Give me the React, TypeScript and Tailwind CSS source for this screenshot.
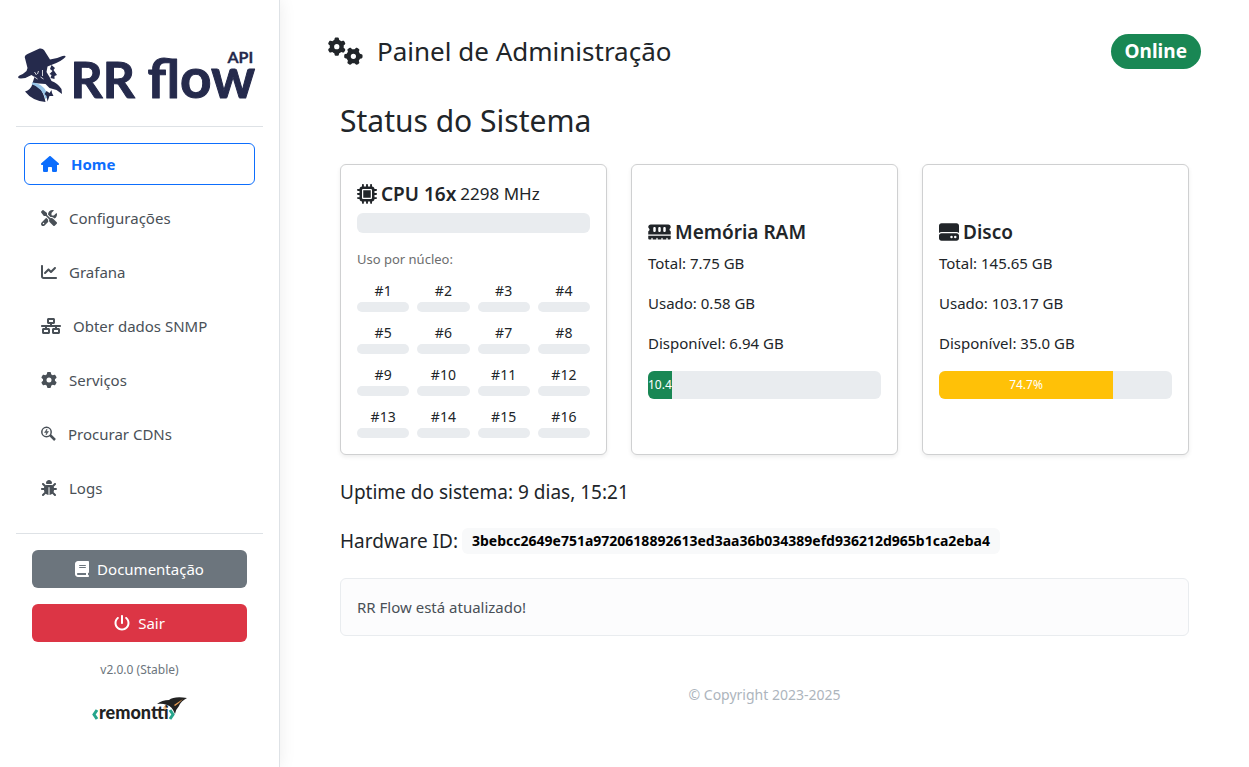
import type { ReactNode } from "react";
import {
  FaBook,
  FaBug,
  FaChartLine,
  FaGear,
  FaGears,
  FaHardDrive,
  FaHouse,
  FaMemory,
  FaMicrochip,
  FaNetworkWired,
  FaPowerOff,
  FaScrewdriverWrench,
} from "react-icons/fa6";

function FlowLogo() {
  return (
    <svg viewBox="0 0 238 56" className="block h-14 w-full overflow-visible" role="img" aria-label="RR flow API">
      <path
        d="M7 20L4.200 9Q4.500 7 7 6L19 0.500Q22 0 23.500 2L29.500 11.500Q37 10.500 42 8Q45.500 7 45 9Q40 14 32 16.500L27 18.500L26 24L29 29L31 33Q37 35 41 41L41.500 46L36 42L29 40L25 36L12 35L14 29L11 27Q5 31 -1.500 30.300Q-3.500 29 -1 27.500Q3 26 6 23Z"
        fill="#252a4c"
      />
      <path d="M12 36Q22 38 25 54Q12 53 4.500 43.500Q10 42 12 36Z" fill="#252a4c" />
      <path d="M12 34.500Q25 36 27.500 49L25 51Q22 40 11 36Z" fill="#98c5e8" />
      <path d="M26 43L29 45L31 42L31.500 45L33 48L29 48L27 53.500L26 48L24 46Z" fill="#252a4c" />
      <path d="M31 17L34.500 20L33 22L36.500 27L34 28L34 31L30 30L31 27L29 26L32 23L29.500 21Z" fill="#252a4c" />
      <path d="M14 24L16 27M18 23L17 26M22 22L22 28M14 29L17 31M20 29L23 31" stroke="#fff" strokeWidth="0.800" fill="none" />
      <g fill="#252a4c" stroke="#252a4c" strokeWidth="1" strokeLinejoin="round" fontFamily="Lato, sans-serif" fontWeight="700">
        <text x="50" y="50" fontSize="50">RR</text>
        <text x="127" y="50" fontSize="53">
          fl<tspan fontSize="55">ow</tspan>
        </text>
        <text x="207" y="15" fontSize="16" strokeWidth="0.3">API</text>
      </g>
    </svg>
  );
}

function RemonttiLogo() {
  return (
    <svg viewBox="0 0 96 28" className="block h-7 w-24 overflow-visible" role="img" aria-label="remontti">
      <path d="M5 14L2 18.500L5 23M78 14L81 18.500L78 23" fill="none" stroke="#27a58c" strokeWidth="3" />
      <text x="7" y="23" fontSize="18" fill="#222" fontFamily="Lato, sans-serif" fontWeight="900">remontti</text>
      <path d="M65 8Q70 4 77 4Q82 0 95 2Q89 5 87 10Q84 13 83 18Q80 10 75 9Q70 7 65 8Z" fill="#222" />
      <path d="M82 9L91 3L87 7L83 10Z" fill="#efa052" />
      <path d="M73 10V14M71 12H75" stroke="#f0ad68" strokeWidth="1" />
    </svg>
  );
}

function SearchBoltIcon({ className }: { className?: string }) {
  return (
    <svg viewBox="0 0 15 16" className={className} fill="none" stroke="currentColor" aria-hidden="true">
      <circle cx="5.500" cy="6" r="4.700" strokeWidth="1.500" />
      <path d="M6 3L3.500 6.500H5.500L5 9L7.500 5.500H5.500Z" fill="currentColor" strokeWidth="0.500" />
      <path d="M9 9L14 14" strokeWidth="2.500" />
    </svg>
  );
}

function NavItem({ icon, label, active = false }: { icon: ReactNode; label: string; active?: boolean }) {
  return (
    <a
      href="#"
      aria-current={active ? "page" : undefined}
      className={
        active
          ? "flex items-center gap-3 rounded-md border border-[#0d6efd] px-4 py-2 font-bold text-[#0d6efd]"
          : "flex items-center gap-3 rounded-md border border-transparent px-4 py-2 text-[#495057]"
      }
    >
      {icon}
      <span>{label}</span>
    </a>
  );
}

function Card({ children }: { children: ReactNode }) {
  return (
    <section className="flex flex-col justify-center rounded-md border border-[#cfd0d1] bg-white p-4 shadow-[0_2px_4px_rgba(0,0,0,0.075)]">
      {children}
    </section>
  );
}

function UsageCard({
  icon,
  title,
  lines,
  percent,
  barClass,
}: {
  icon: ReactNode;
  title: string;
  lines: string[];
  percent: number;
  barClass: string;
}) {
  return (
    <Card>
      <h2 className="mb-[7px] flex items-center gap-1 text-[19px] leading-6 font-semibold">
        {icon}
        {title}
      </h2>
      <div className="flex flex-col gap-4">
        {lines.map((line) => (
          <p key={line}>{line}</p>
        ))}
      </div>
      <div className="mt-4 h-7 overflow-hidden rounded-md bg-[#e9ecef] text-xs text-white">
        <div className={barClass} style={{ width: `${percent}%` }}>
          {percent}%
        </div>
      </div>
    </Card>
  );
}

const cores = Array.from({ length: 16 }, (_, i) => i + 1);

export default function App() {
  return (
    <div className="flex min-h-screen bg-white font-['Noto_Sans',sans-serif] text-[15px] leading-6 text-[#212529]">
      <aside className="flex w-[280px] shrink-0 flex-col border-r border-[#dee2e6] p-4 shadow-[0_0_16px_rgba(0,0,0,0.08)]">
        <a href="#" className="mt-8 mb-6 block px-0.5">
          <FlowLogo />
        </a>
        <hr className="-mt-0.5 border-[#dee2e6]" />
        <nav className="my-4 flex flex-col gap-3 px-2">
          <NavItem active icon={<FaHouse className="h-4 w-[18px]" />} label="Home" />
          <NavItem icon={<FaScrewdriverWrench className="size-4" />} label="Configurações" />
          <NavItem icon={<FaChartLine className="size-4" />} label="Grafana" />
          <NavItem icon={<FaNetworkWired className="h-4 w-5" />} label="Obter dados SNMP" />
          <NavItem icon={<FaGear className="size-4" />} label="Serviços" />
          <NavItem icon={<SearchBoltIcon className="h-4 w-[15px]" />} label="Procurar CDNs" />
          <NavItem icon={<FaBug className="size-4" />} label="Logs" />
        </nav>
        <hr className="mt-2 border-[#dee2e6]" />
        <div className="mt-4 flex flex-col gap-4 px-4 text-white">
          <button className="flex items-center justify-center gap-2 rounded-md bg-[#6c757d] py-[7px]">
            <FaBook className="h-4 w-[14px]" />
            Documentação
          </button>
          <button className="flex items-center justify-center gap-2 rounded-md bg-[#dc3545] py-[7px]">
            <FaPowerOff className="size-4" />
            Sair
          </button>
        </div>
        <p className="mt-[18px] text-center text-xs leading-5 text-[#6c757d]">v2.0.0 (Stable)</p>
        <a href="#" className="mt-4 self-center">
          <RemonttiLogo />
        </a>
      </aside>

      <main className="min-w-0 flex-1 px-12 pt-8">
        <header className="flex items-center justify-between">
          <h1 className="flex items-center gap-[14px] text-[26px] leading-[38px]">
            <FaGears className="h-7 w-[35px]" />
            Painel de Administração
          </h1>
          <span className="rounded-full bg-[#198754] px-[14px] py-[7px] text-[19px] leading-[21px] font-bold text-white">Online</span>
        </header>

        <div className="mt-8 px-3">
          <h2 className="mb-6 text-3xl leading-[38px]">Status do Sistema</h2>
          <div className="grid grid-cols-3 gap-6">
            <Card>
              <h2 className="mb-1.5 flex items-center gap-1 text-[19px] leading-[26px] font-semibold">
                <FaMicrochip className="size-5" />
                CPU 16x
                <small className="text-[17px] font-normal">2298 MHz</small>
              </h2>
              <div className="h-5 rounded-md bg-[#e9ecef]" />
              <p className="mt-4 text-[13px] leading-[21px] text-[#6c6d6e]">Uso por núcleo:</p>
              <div className="mt-2.5 grid grid-cols-4 gap-x-2 gap-y-2.5">
                {cores.map((core) => (
                  <div key={core} className="text-center text-sm leading-[21px]">
                    #{core}
                    <div className="mt-px h-2.5 rounded-md bg-[#e9ecef]" />
                  </div>
                ))}
              </div>
            </Card>
            <UsageCard
              icon={<FaMemory className="h-5 w-[23px]" />}
              title="Memória RAM"
              lines={["Total: 7.75 GB", "Usado: 0.58 GB", "Disponível: 6.94 GB"]}
              percent={10.4}
              barClass="flex h-full items-center overflow-hidden bg-[#198754]"
            />
            <UsageCard
              icon={<FaHardDrive className="size-5" />}
              title="Disco"
              lines={["Total: 145.65 GB", "Usado: 103.17 GB", "Disponível: 35.0 GB"]}
              percent={74.7}
              barClass="flex h-full items-center justify-center overflow-hidden bg-[#ffc107]"
            />
          </div>

          <p className="mt-[25px] text-[19px] leading-6">Uptime do sistema: 9 dias, 15:21</p>
          <p className="mt-6 flex items-center gap-1 text-[19px] leading-[26px]">
            Hardware ID:
            <span className="rounded-md bg-[#f8f9fa] px-[10px] text-sm leading-[26px] font-bold text-black">
              3bebcc2649e751a9720618892613ed3aa36b034389efd936212d965b1ca2eba4
            </span>
          </p>
          <div className="mt-6 rounded-md border border-[#e9ecef] bg-[#fcfcfd] p-4 text-[#495057]">RR Flow está atualizado!</div>
        </div>
        <footer className="mt-12 text-center text-sm leading-[21px] text-[#adb5bd]">© Copyright 2023-2025</footer>
      </main>
    </div>
  );
}
